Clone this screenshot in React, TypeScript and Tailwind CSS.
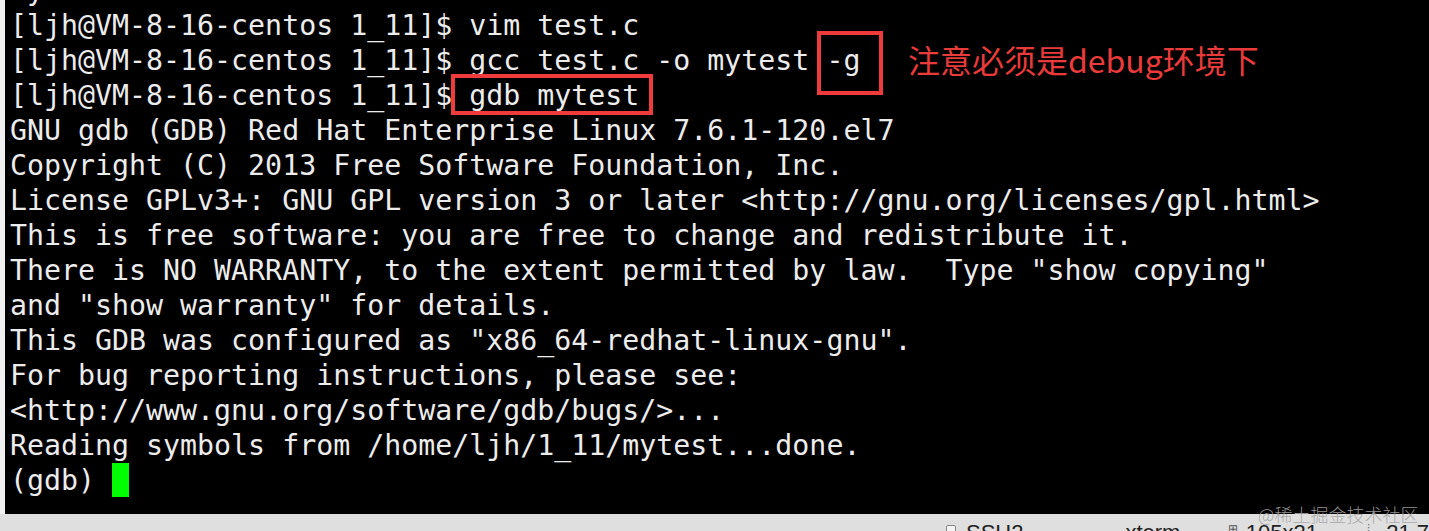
const lines = [
  " y",
  "[ljh@VM-8-16-centos 1_11]$ vim test.c",
  "[ljh@VM-8-16-centos 1_11]$ gcc test.c -o mytest -g",
  "[ljh@VM-8-16-centos 1_11]$ gdb mytest",
  "GNU gdb (GDB) Red Hat Enterprise Linux 7.6.1-120.el7",
  "Copyright (C) 2013 Free Software Foundation, Inc.",
  "License GPLv3+: GNU GPL version 3 or later <http://gnu.org/licenses/gpl.html>",
  "This is free software: you are free to change and redistribute it.",
  'There is NO WARRANTY, to the extent permitted by law.  Type "show copying"',
  'and "show warranty" for details.',
  'This GDB was configured as "x86_64-redhat-linux-gnu".',
  "For bug reporting instructions, please see:",
  "<http://www.gnu.org/software/gdb/bugs/>...",
  "Reading symbols from /home/ljh/1_11/mytest...done.",
];

const App = () => {
  return (
    <div className="relative flex h-[531px] w-[1429px] flex-col overflow-hidden bg-[#f0f0f0]">
      {/* terminal */}
      <div className="ml-[5px] h-[514px] shrink-0 overflow-hidden bg-black pl-[5px] font-['DejaVu_Sans_Mono',monospace] text-[28.25px] leading-[35px] text-[#ececec]">
        <div className="-mt-[27.5px]">
          {lines.map((line, i) => (
            <div key={i} className="h-[35px] whitespace-pre">
              {line}
            </div>
          ))}
          <div className="h-[35px] whitespace-pre">
            {"(gdb) "}
            <span className="mt-[0.5px] inline-block h-[34px] w-[17px] bg-[#00ff00] align-top" />
          </div>
        </div>
      </div>

      {/* status bar */}
      <div className="flex h-[17px] shrink-0 bg-[#dfdfdf] pl-[946px] pt-[8px] font-['Liberation_Sans',sans-serif] text-[22px] leading-none text-[#222]">
        <div className="flex w-[184px] items-start gap-[10px]">
          <span className="mt-[3px] inline-block h-[12px] w-[10px] rounded-[2px] border border-[#888] bg-[#f4f4f4]" />
          <span>SSH2</span>
        </div>
        <div className="w-[105px]">xterm</div>
        <div className="flex w-[143px] items-start gap-[8px]">
          <span className="mt-[1px] text-[12px] text-[#555]">⊞</span>
          <span>105x21</span>
        </div>
        <div className="flex items-start gap-[16px]">
          <span className="text-[12px] text-[#555]">⫶</span>
          <span>21,7</span>
        </div>
      </div>

      {/* annotations */}
      <div className="absolute left-[817px] top-[31px] h-[64px] w-[66px] border-4 border-[#ef3b3b]" />
      <div className="absolute left-[451px] top-[74px] h-[41px] w-[202px] border-4 border-[#ef3b3b]" />
      <div className="absolute left-[908px] top-[43px] font-['Noto_Sans_CJK_SC',sans-serif] text-[32px] leading-none text-[#ea3b3b]">
        注意必须是debug环境下
      </div>

      {/* watermark */}
      <div className="absolute left-[1258px] top-[505px] font-['Noto_Sans_CJK_SC',sans-serif] text-[18px] font-light leading-none text-[#a4a4a4]/90">
        @稀土掘金技术社区
      </div>
    </div>
  );
};

export default App;
